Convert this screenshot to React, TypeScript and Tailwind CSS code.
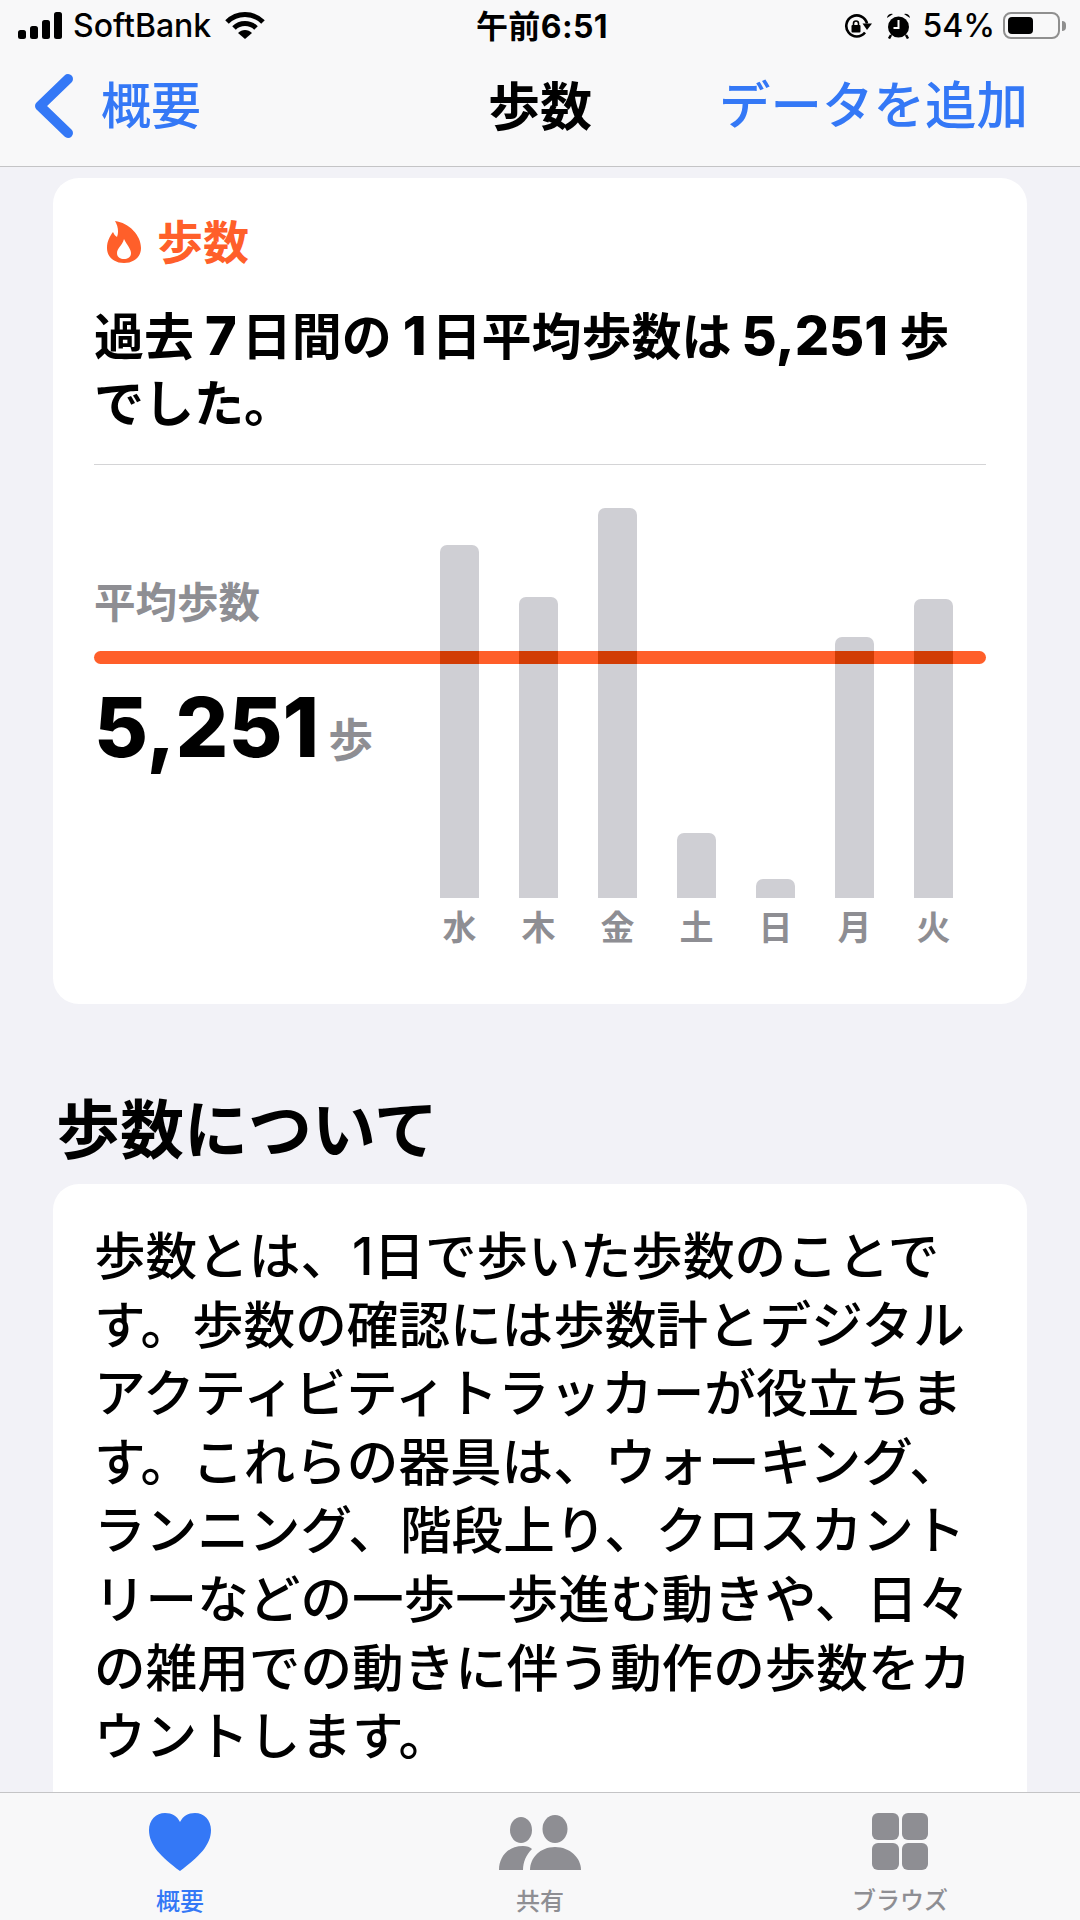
const CJK = { fontFamily: '"Inter","Noto Sans CJK JP",sans-serif' };

const bars = [
  { d: '水', h: 353 },
  { d: '木', h: 301 },
  { d: '金', h: 390 },
  { d: '土', h: 65 },
  { d: '日', h: 19 },
  { d: '月', h: 261 },
  { d: '火', h: 299 },
];

const lines = [
  '歩数とは、1日で歩いた歩数のことで',
  'す。歩数の確認には歩数計とデジタル',
  'アクティビティトラッカーが役立ちま',
  'す。これらの器具は、ウォーキング、',
  'ランニング、階段上り、クロスカント',
  'リーなどの一歩一歩進む動きや、日々',
  'の雑用での動きに伴う動作の歩数をカ',
  'ウントします。',
];

function StatusBar() {
  return (
    <div className="flex h-[60px] items-center justify-between pl-[18px] pr-[14px] pb-[9px]">
      <div className="flex w-[300px] items-center">
        <svg width="44" height="27" viewBox="0 0 44 27" fill="#000">
          <rect x="0" y="18" width="8" height="9" rx="2.5" />
          <rect x="12" y="14" width="8" height="13" rx="2.5" />
          <rect x="24" y="8" width="8" height="19" rx="2.5" />
          <rect x="36" y="0" width="8" height="27" rx="2.5" />
        </svg>
        <span className="ml-[11px] text-[32px] leading-none font-medium text-black">SoftBank</span>
        <svg className="ml-[14px]" width="40" height="28" viewBox="0 0 40 28" fill="none" stroke="#000" strokeWidth="5">
          <path d="M2 10 C12 0 28 0 38 10" />
          <path d="M9 16 C15 10 25 10 31 16" />
          <path d="M20 27 L13 21 C17 17 23 17 27 21 Z" fill="#000" stroke="none" />
        </svg>
      </div>
      <span className="mt-[3px] text-[32px] leading-none font-bold tracking-[0.4px] text-black">午前6:51</span>
      <div className="flex w-[300px] items-center justify-end">
        <svg width="28" height="24" viewBox="0 0 28 24" fill="none" stroke="#000" strokeWidth="2.6">
          <path d="M21 18.5 A10.5 10.5 0 1 1 23 9.5" />
          <path d="M28 9.5 L23 16 L18.5 9.5 Z" fill="#000" stroke="none" />
          <rect x="7.5" y="11" width="9" height="7.5" rx="1" fill="#000" stroke="none" />
          <path d="M9.5 11.5 V9.5 a2.5 2.5 0 0 1 5 0 V11.5" strokeWidth="1.6" />
        </svg>
        <svg className="ml-[14px]" width="25" height="26" viewBox="0 0 25 26" fill="#000">
          <circle cx="12.5" cy="14" r="10.5" />
          <path d="M1 5 A4.5 4.5 0 0 1 7 1 Z" />
          <path d="M24 5 A4.5 4.5 0 0 0 18 1 Z" />
          <path d="M12.5 7 V15 H7.5" stroke="#fff" strokeWidth="2" fill="none" />
          <path d="M5 22 L3 25.5 M20 22 L22 25.5" stroke="#000" strokeWidth="2.5" />
        </svg>
        <span className="ml-[11px] text-[32px] leading-none font-medium text-black">54%</span>
        <div className="ml-[8px] flex h-[27px] w-[57px] items-center rounded-[8px] border-2 border-[#8f8f8f] p-[3px]">
          <div className="h-full w-[25px] rounded-[4px] bg-black" />
        </div>
        <div className="ml-[2px] h-[10px] w-[4px] rounded-r-full bg-[#8f8f8f]" />
      </div>
    </div>
  );
}

function NavBar() {
  return (
    <div className="relative flex h-[107px] items-center justify-between border-b border-[#c4c4c6] pr-[52px] pl-[34px] pb-[14px]">
      <div className="flex items-center">
        <svg width="40" height="64" viewBox="0 0 40 64" fill="none" stroke="#3478f6" strokeWidth="10" strokeLinecap="round" strokeLinejoin="round">
          <path d="M34 5 L6 32 L34 59" />
        </svg>
        <span className="ml-[27px] text-[50px] leading-none font-medium text-[#3478f6]">概要</span>
      </div>
      <span className="absolute left-0 right-0 top-[22px] text-center text-[52px] leading-none font-bold text-black">歩数</span>
      <span className="text-[51.5px] leading-none font-medium text-[#3478f6]">データを追加</span>
    </div>
  );
}

function StepsCard() {
  return (
    <div className="mx-[53px] mt-[11px] h-[826px] shrink-0 rounded-[26px] bg-white pl-[41px] pr-[41px]">
      <div className="flex items-center pt-[39px]">
        <svg className="ml-[13px]" width="34" height="42" viewBox="0 0 34 42">
          <path
            d="M8 0 C22 2 34 14 34 27 C34 36 27 42 17 42 C7 42 0 36 0 27 C0 20 3 15 6 11 C7 13 8 15 10 16 C12 11 11 5 8 0 Z"
            fill="#ff5f2a"
          />
          <path d="M17 18 C20 24 24 28 24 32 C24 36 21 38 17 38 C13 38 10 36 10 32 C10 27 15 25 17 18 Z" fill="#fff" />
        </svg>
        <span className="ml-[16px] text-[46px] leading-[50px] font-bold text-[#ff5f2a]">歩数</span>
      </div>
      <div className="mt-[37px] text-[50px] leading-[67px] font-bold text-black whitespace-nowrap">
        <div>
          過去<span className="ml-[11px] mr-[5px] text-[54px] leading-none font-extrabold">7</span>日間の<span className="ml-[11px] mr-[5px] text-[54px] leading-none font-extrabold">1</span>日平均歩数は<span className="ml-[10px] mr-[11px] text-[54px] leading-none font-extrabold">5,251</span>歩
        </div>
        <div>でした。</div>
      </div>
      <div className="mt-[26px] h-px bg-[#d4d4d6]" />
      <div className="relative flex h-[433px]">
        <div className="absolute left-0 right-0 top-[186px] h-[13px] rounded-full bg-[#ff5f2a]" />
        <div className="relative w-[346px] shrink-0">
          <div className="pt-[113px] text-[41.5px] leading-[50px] font-bold text-[#8e8e93]">平均歩数</div>
          <div className="mt-[54px] flex items-baseline">
            <span className="text-[83px] leading-[90px] font-extrabold text-black">5,251</span>
            <span className="ml-[9px] text-[45px] leading-none font-bold text-[#8e8e93]">歩</span>
          </div>
        </div>
        <div className="relative flex gap-[40px]">
          {bars.map((b) => (
            <div key={b.d} className="flex h-[494px] w-[39px] flex-col items-center">
              <div className="flex h-[433px] w-full flex-col justify-end">
                <div className="relative w-full rounded-t-[7px] bg-[#cfcfd4]" style={{ height: b.h }}>
                  {b.h > 247 && <div className="absolute right-0 bottom-[234px] left-0 h-[13px] bg-[#d13c04]" />}
                </div>
              </div>
              <span className="mt-[12px] text-[34px] leading-[36px] font-bold text-[#8e8e93]">{b.d}</span>
            </div>
          ))}
        </div>
      </div>
    </div>
  );
}

function AboutSection() {
  return (
    <>
      <div className="mt-[90px] shrink-0 pl-[56px] text-[64px] leading-[72px] font-bold text-black">歩数について</div>
      <div className="mx-[53px] mt-[18px] flex-1 rounded-t-[26px] bg-white pl-[41px] pt-[38px]">
        {lines.map((l) => (
          <div key={l} className="text-[51.6px] leading-[68.6px] font-medium whitespace-nowrap text-black">
            {l}
          </div>
        ))}
      </div>
    </>
  );
}

function TabBar() {
  return (
    <div className="grid h-[128px] shrink-0 grid-cols-3 border-t border-[#c4c4c6] bg-[#f8f8f9]">
      <div className="flex flex-col items-center pt-[20px]">
        <svg width="62" height="58" viewBox="0 0 62 58" fill="#3478f6">
          <path d="M31 58 C12 44 0 32 0 17 C0 7 7 0 16 0 C23 0 28 3 31 9 C34 3 39 0 46 0 C55 0 62 7 62 17 C62 32 50 44 31 58 Z" />
        </svg>
        <span className="mt-[19px] text-[24px] leading-none font-medium text-[#3478f6]">概要</span>
      </div>
      <div className="flex flex-col items-center pt-[22px]">
        <svg width="82" height="56" viewBox="0 0 82 56" fill="#8e8e93">
          <ellipse cx="22" cy="15" rx="11" ry="13" />
          <ellipse cx="56" cy="14" rx="12.5" ry="14" />
          <path d="M0 55 C0 43 8 31 24 31 C28 31 31 32 33 34 C27 40 24 47 24 55 Z" />
          <path d="M31 55 C31 43 41 32 56 32 C71 32 82 43 82 55 Z" />
        </svg>
        <span className="mt-[19px] text-[24px] leading-none font-medium text-[#8e8e93]">共有</span>
      </div>
      <div className="flex flex-col items-center pt-[20px]">
        <div className="grid h-[57px] w-[56px] grid-cols-2 gap-[3px]">
          <div className="rounded-[6px] bg-[#8e8e93]" />
          <div className="rounded-[6px] bg-[#8e8e93]" />
          <div className="rounded-[6px] bg-[#8e8e93]" />
          <div className="rounded-[6px] bg-[#8e8e93]" />
        </div>
        <span className="mt-[19px] text-[24px] leading-none font-medium text-[#8e8e93]">ブラウズ</span>
      </div>
    </div>
  );
}

export default function App() {
  return (
    <div className="flex h-[1920px] w-[1080px] flex-col overflow-hidden bg-[#f2f2f7]" style={CJK}>
      <div className="shrink-0 bg-[#f8f8f9]">
        <StatusBar />
        <NavBar />
      </div>
      <StepsCard />
      <AboutSection />
      <TabBar />
    </div>
  );
}
